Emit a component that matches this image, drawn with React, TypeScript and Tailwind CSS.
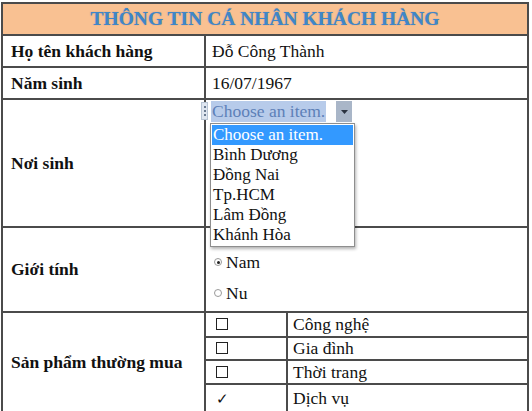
import React from "react";

const places = ["Bình Dương", "Đồng Nai", "Tp.HCM", "Lâm Đồng", "Khánh Hòa"];
const products = [
  { name: "Công nghệ", checked: false },
  { name: "Gia đình", checked: false },
  { name: "Thời trang", checked: false },
  { name: "Dịch vụ", checked: true },
];

const cell = "border-2 border-[#4b4b4b]";

export default function App() {
  return (
    <div
      className="w-[532px] h-[411px] bg-white pt-[2px] pl-[1px] text-[#111]"
      style={{ fontFamily: '"Liberation Serif", "Times New Roman", serif' }}
    >
      <table className="w-[528px] border-collapse table-fixed">
        <colgroup>
          <col className="w-[203px]" />
          <col />
        </colgroup>
        <tbody>
          {/* tiêu đề */}
          <tr className="h-[32px]">
            <td
              colSpan={2}
              className={`${cell} bg-[#f9c192] text-center text-[19.5px] font-bold text-[#3f86c8] [text-shadow:0_0_1px_rgba(40,90,140,0.5)]`}
            >
              THÔNG TIN CÁ NHÂN KHÁCH HÀNG
            </td>
          </tr>
          <tr className="h-[32px]">
            <td className={`${cell} pl-[8px] text-[17.5px] font-bold`}>Họ tên khách hàng</td>
            <td className={`${cell} pl-[6px] text-[17.5px]`}>Đỗ Công Thành</td>
          </tr>
          <tr className="h-[32px]">
            <td className={`${cell} pl-[8px] text-[17.5px] font-bold`}>Năm sinh</td>
            <td className={`${cell} pl-[6px] text-[17.5px]`}>16/07/1967</td>
          </tr>
          <tr className="h-[128px]">
            <td className={`${cell} pl-[8px] text-[17.5px] font-bold`}>Nơi sinh</td>
            <td className={`${cell} p-0 align-top`}>
              <div className="relative h-[126px]">
                {/* tay nắm điều khiển */}
                <div className="absolute left-[-5px] top-[2px] w-[7px] h-[18px] bg-[#dfe6f0] border border-[#b8c4d4] flex flex-col items-center justify-center gap-[2px]">
                  <span className="w-[2px] h-[2px] bg-[#6a7a90]" />
                  <span className="w-[2px] h-[2px] bg-[#6a7a90]" />
                  <span className="w-[2px] h-[2px] bg-[#6a7a90]" />
                </div>
                <div className="absolute left-[5px] top-[1px] flex items-center h-[21px]">
                  <span className="bg-[#b7cbea] text-[#5d80b8] text-[17.5px] leading-[21px] pl-[1px] pr-[1px]">
                    Choose an item.
                  </span>
                  <span className="ml-[10px] w-[16px] h-[21px] bg-[#a9b6c8] flex items-center justify-center">
                    <svg width="7" height="4" viewBox="0 0 7 4">
                      <path d="M0 0h7L3.5 4z" fill="#2b3340" />
                    </svg>
                  </span>
                </div>
                {/* danh sách thả xuống */}
                <div className="absolute z-10 left-[4px] top-[23px] w-[145px] bg-white border border-[#8e8e8e] shadow-[1px_2px_3px_rgba(0,0,0,0.3)] p-[1px] text-[17px] leading-[20px]">
                  <div className="bg-[#3399ff] text-white pl-[1px]">Choose an item.</div>
                  {places.map((p) => (
                    <div key={p} className="pl-[1px]">
                      {p}
                    </div>
                  ))}
                </div>
              </div>
            </td>
          </tr>
          <tr className="h-[85px]">
            <td className={`${cell} pl-[8px] text-[17.5px] font-bold`}>Giới tính</td>
            <td className={`${cell} pl-[8px] pt-[24px] align-top text-[17.5px]`}>
              <div className="flex items-center gap-[4px] h-[20px]">
                <span className="w-[8px] h-[8px] rounded-full border border-[#9a9a9a] flex items-center justify-center">
                  <span className="w-[3px] h-[3px] rounded-full bg-[#222]" />
                </span>
                <span>Nam</span>
              </div>
              <div className="flex items-center gap-[4px] h-[20px] mt-[11px]">
                <span className="w-[8px] h-[8px] rounded-full border border-[#9a9a9a]" />
                <span>Nu</span>
              </div>
            </td>
          </tr>
          <tr className="h-[96px]">
            <td className={`${cell} pl-[8px] text-[17.5px] font-bold`}>Sản phẩm thường mua</td>
            <td className={`${cell} p-0`}>
              <table className="w-full border-collapse table-fixed text-[17.5px]">
                <colgroup>
                  <col className="w-[81px]" />
                  <col />
                </colgroup>
                <tbody>
                  {products.map((p, i) => (
                    <tr key={p.name} className="h-[23.5px]">
                      <td className={`pl-[10px] ${i > 0 ? "border-t-2 border-[#4b4b4b]" : ""}`}>
                        {p.checked ? (
                          <span className="text-[15px] leading-none">✓</span>
                        ) : (
                          <span className="block w-[12px] h-[12px] border border-[#222]" />
                        )}
                      </td>
                      <td
                        className={`pl-[5px] border-l-2 border-[#4b4b4b] leading-[20px] ${
                          i > 0 ? "border-t-2" : ""
                        }`}
                      >
                        {p.name}
                      </td>
                    </tr>
                  ))}
                </tbody>
              </table>
            </td>
          </tr>
        </tbody>
      </table>
    </div>
  );
}
